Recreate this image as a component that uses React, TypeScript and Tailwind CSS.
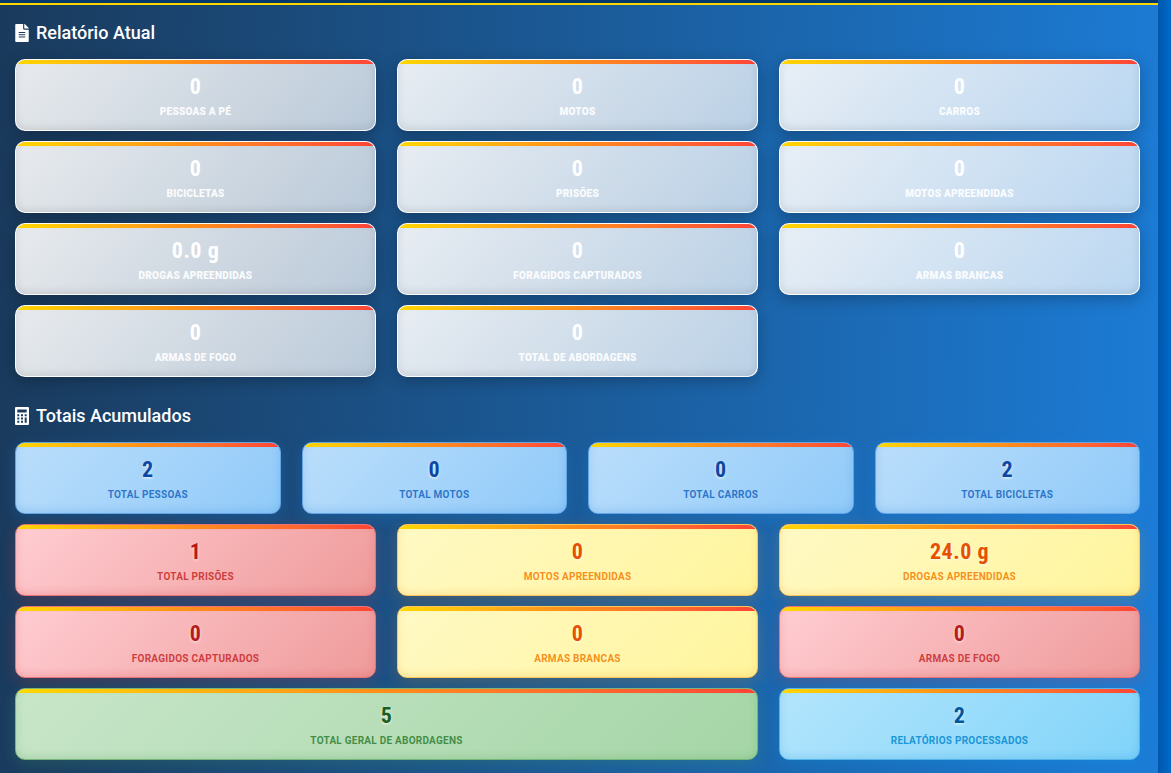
import { FaFileAlt } from "react-icons/fa";
import type { ReactNode } from "react";

type Tone = "glass" | "blue" | "red" | "yellow" | "green" | "cyan";

type Stat = { value: string; label: string; tone: Tone; span: string };

const tones: Record<Tone, { card: string; value: string; label: string }> = {
  glass: {
    card: "border-white/90 bg-linear-[135deg] from-white/90 to-white/70 shadow-[0_4px_15px_rgba(0,0,0,0.25),inset_0_-2px_8px_rgba(0,0,0,0.1)]",
    value: "text-white",
    label: "text-white/90 font-black",
  },
  blue: {
    card: "border-[#64a5e6] bg-linear-[135deg] from-[#bbdefb] to-[#90caf9] shadow-[0_4px_15px_rgba(33,150,243,0.2),inset_0_-2px_8px_rgba(25,118,210,0.2)]",
    value: "text-[#0d47a1] [text-shadow:0_1px_3px_rgba(255,255,255,0.8)]",
    label: "text-[#1565c0]/85 font-bold",
  },
  red: {
    card: "border-[#e87378] bg-linear-[135deg] from-[#ffcdd2] to-[#ef9a9a] shadow-[0_4px_15px_rgba(244,67,54,0.2),inset_0_-2px_8px_rgba(211,47,47,0.2)]",
    value: "text-[#b71c1c] [text-shadow:0_1px_3px_rgba(255,255,255,0.8)]",
    label: "text-[#c62828]/85 font-bold",
  },
  yellow: {
    card: "border-[#fbc45c] bg-linear-[135deg] from-[#fff9c4] to-[#fff59d] shadow-[0_4px_15px_rgba(255,152,0,0.2),inset_0_-2px_8px_rgba(255,152,0,0.2)]",
    value: "text-[#e65100] [text-shadow:0_1px_3px_rgba(255,255,255,0.8)]",
    label: "text-[#f57c00]/85 font-bold",
  },
  green: {
    card: "border-[#76b67a] bg-linear-[135deg] from-[#c8e6c9] to-[#a5d6a7] shadow-[0_4px_15px_rgba(76,175,80,0.2),inset_0_-2px_8px_rgba(56,142,60,0.2)]",
    value: "text-[#1b5e20] [text-shadow:0_1px_3px_rgba(255,255,255,0.8)]",
    label: "text-[#2e7d32]/85 font-bold",
  },
  cyan: {
    card: "border-[#56b4ea] bg-linear-[135deg] from-[#b3e5fc] to-[#81d4fa] shadow-[0_4px_15px_rgba(3,169,244,0.2),inset_0_-2px_8px_rgba(2,136,209,0.2)]",
    value: "text-[#01579b] [text-shadow:0_1px_3px_rgba(255,255,255,0.8)]",
    label: "text-[#0288d1]/85 font-bold",
  },
};

const third = "col-span-4";
const quarter = "col-span-3";

const current: Stat[] = [
  { value: "0", label: "Pessoas a pé", tone: "glass", span: third },
  { value: "0", label: "Motos", tone: "glass", span: third },
  { value: "0", label: "Carros", tone: "glass", span: third },
  { value: "0", label: "Bicicletas", tone: "glass", span: third },
  { value: "0", label: "Prisões", tone: "glass", span: third },
  { value: "0", label: "Motos apreendidas", tone: "glass", span: third },
  { value: "0.0 g", label: "Drogas apreendidas", tone: "glass", span: third },
  { value: "0", label: "Foragidos capturados", tone: "glass", span: third },
  { value: "0", label: "Armas brancas", tone: "glass", span: third },
  { value: "0", label: "Armas de fogo", tone: "glass", span: third },
  { value: "0", label: "Total de abordagens", tone: "glass", span: third },
];

const totals: Stat[] = [
  { value: "2", label: "Total pessoas", tone: "blue", span: quarter },
  { value: "0", label: "Total motos", tone: "blue", span: quarter },
  { value: "0", label: "Total carros", tone: "blue", span: quarter },
  { value: "2", label: "Total bicicletas", tone: "blue", span: quarter },
  { value: "1", label: "Total prisões", tone: "red", span: third },
  { value: "0", label: "Motos apreendidas", tone: "yellow", span: third },
  { value: "24.0 g", label: "Drogas apreendidas", tone: "yellow", span: third },
  { value: "0", label: "Foragidos capturados", tone: "red", span: third },
  { value: "0", label: "Armas brancas", tone: "yellow", span: third },
  { value: "0", label: "Armas de fogo", tone: "red", span: third },
  { value: "5", label: "Total geral de abordagens", tone: "green", span: "col-span-8" },
  { value: "2", label: "Relatórios processados", tone: "cyan", span: third },
];

function StatCard({ stat }: { stat: Stat }) {
  const tone = tones[stat.tone];
  return (
    <div className={`${stat.span} ${tone.card} flex flex-col overflow-hidden rounded-[10px] border pb-[10px] text-center`}>
      <div className="h-1 bg-linear-to-r from-[#ffd700] via-[#ff8c1a] to-[#ff4336]" />
      <div
        className={`${tone.value} mt-[11px] font-['Roboto_Condensed',Roboto,sans-serif] text-[22px] leading-6 font-bold tracking-wide`}
      >
        {stat.value}
      </div>
      <div className={`${tone.label} mt-[5px] text-[10px] leading-4 tracking-wide uppercase`}>{stat.label}</div>
    </div>
  );
}

function CalculatorIcon() {
  return (
    <svg viewBox="0 0 14 18" className="h-[18px] w-[14px]" fill="currentColor" aria-hidden="true">
      <path
        fillRule="evenodd"
        d="M1 0h12a1 1 0 0 1 1 1v16a1 1 0 0 1-1 1H1a1 1 0 0 1-1-1V1a1 1 0 0 1 1-1ZM2.3 2.6v3h9.4v-3ZM2.3 7.3v2h2v-2ZM6 7.3v2h2v-2ZM9.7 7.3v2h2v-2ZM2.3 10.6v2h2v-2ZM6 10.6v2h2v-2ZM9.7 10.6v5.2h2v-5.2ZM2.3 13.8v2h2v-2ZM6 13.8v2h2v-2Z"
      />
    </svg>
  );
}

function Section({ icon, title, stats }: { icon: ReactNode; title: string; stats: Stat[] }) {
  return (
    <section>
      <h2 className="flex items-center gap-[7px] text-lg leading-6 font-medium text-white">
        {icon}
        {title}
      </h2>
      <div className="mt-[14px] grid grid-cols-12 gap-x-[21px] gap-y-[10px]">
        {stats.map((stat, i) => (
          <StatCard key={i} stat={stat} />
        ))}
      </div>
    </section>
  );
}

export default function App() {
  return (
    <div className="min-h-screen bg-linear-to-r from-[#0056ac] from-[98.8%] to-[#006ac8] pr-[13px] font-[Roboto,sans-serif]">
      <div className="h-[3px] bg-[#05386b]" />
      <main className="flex min-h-[calc(100vh-3px)] flex-col gap-[27px] border-t-2 border-[#ffd700] bg-linear-[92deg] from-[#1a3a5c] to-[#1c7cd6] pt-[16px] pr-[18px] pb-[13px] pl-[15px]">
        <Section icon={<FaFileAlt className="h-[18px] w-[14px]" />} title="Relatório Atual" stats={current} />
        <Section icon={<CalculatorIcon />} title="Totais Acumulados" stats={totals} />
      </main>
    </div>
  );
}
